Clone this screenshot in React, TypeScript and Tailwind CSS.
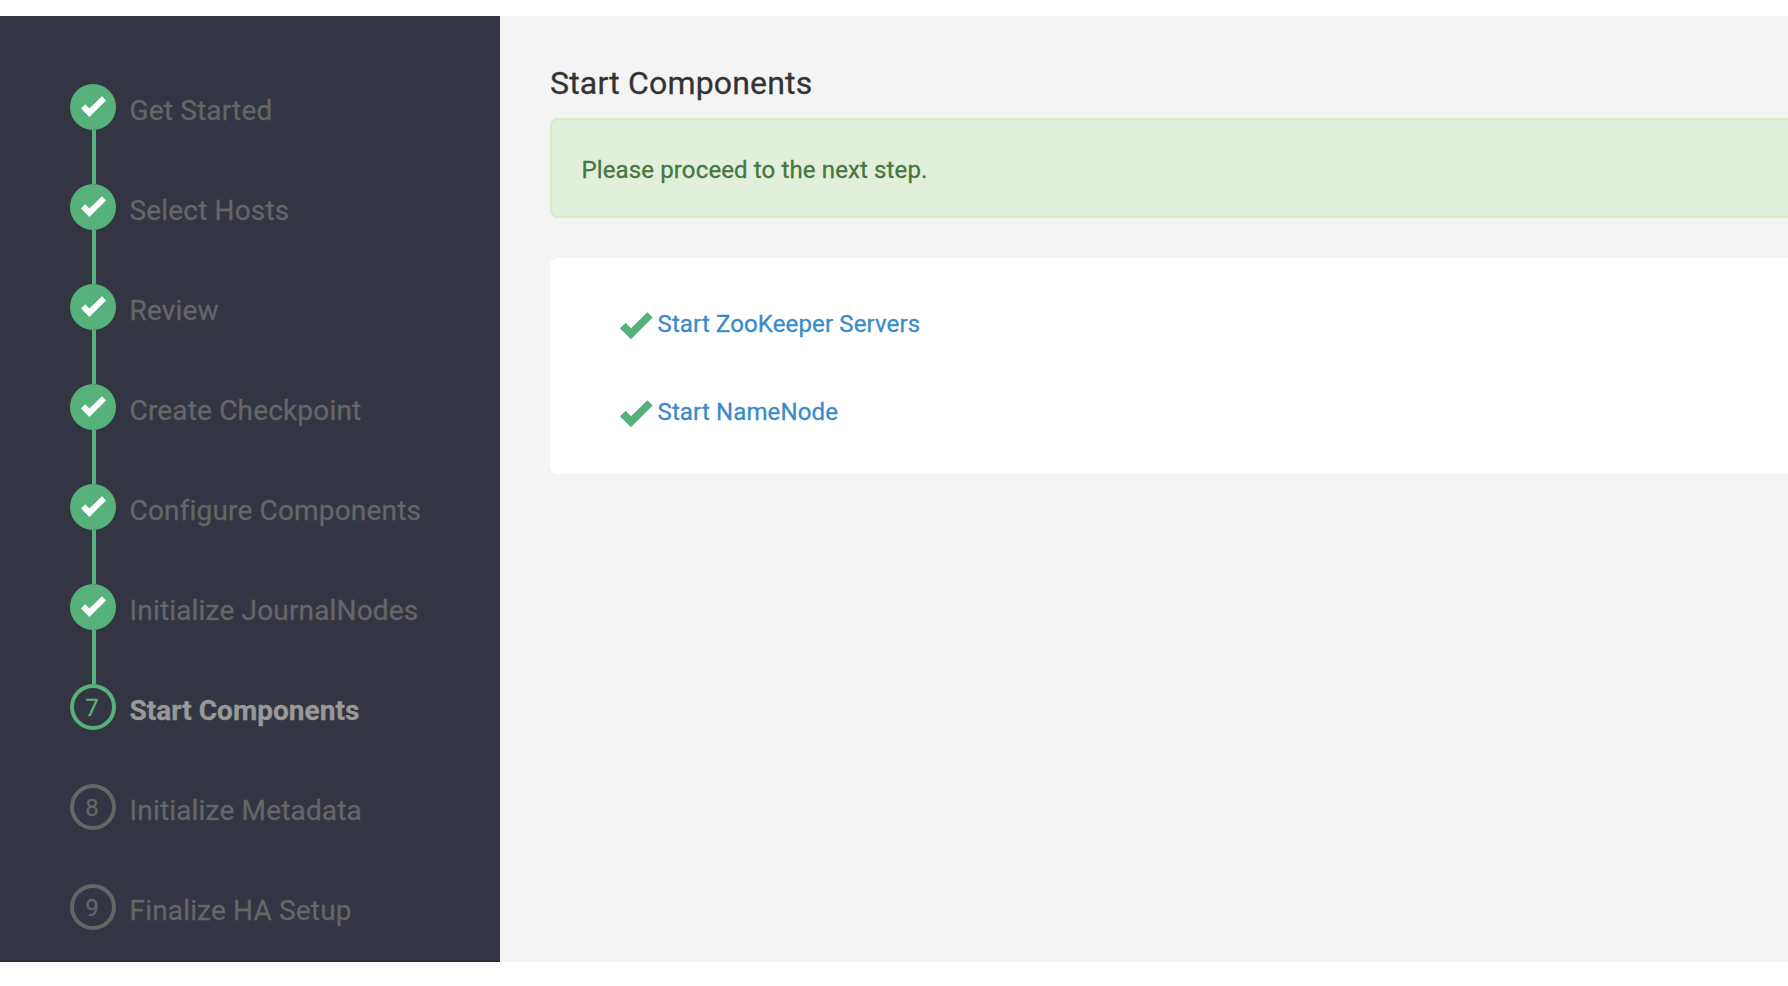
type Step = { label: string; state: "done" | "current" | "todo" };

const steps: Step[] = [
  { label: "Get Started", state: "done" },
  { label: "Select Hosts", state: "done" },
  { label: "Review", state: "done" },
  { label: "Create Checkpoint", state: "done" },
  { label: "Configure Components", state: "done" },
  { label: "Initialize JournalNodes", state: "done" },
  { label: "Start Components", state: "current" },
  { label: "Initialize Metadata", state: "todo" },
  { label: "Finalize HA Setup", state: "todo" },
];

const tasks = ["Start ZooKeeper Servers", "Start NameNode"];

function Check({ className }: { className: string }) {
  return (
    <svg viewBox="0 0 33 28" className={className} fill="currentColor" aria-hidden="true">
      <path d="M0 16.2 5.6 10.8 11 16.3 27.3 0.3 32.7 5.6 11 27.3Z" />
    </svg>
  );
}

const circleStyle = {
  done: "border-[#56b17a] bg-[#56b17a] text-white",
  current: "border-[#56b17a] text-[#56b17a]",
  todo: "border-[#666666] text-[#666666]",
};

function WizardStep({ step, index }: { step: Step; index: number }) {
  return (
    <li className="flex h-[100px] items-start">
      <div className="flex h-full w-[46px] shrink-0 flex-col items-center">
        <div
          className={`flex size-[46px] shrink-0 items-center justify-center rounded-full border-4 text-[24px] leading-none ${circleStyle[step.state]}`}
        >
          {step.state === "done" ? (
            <Check className="ml-[0.5px] h-[21.5px] w-[25.3px] shrink-0" />
          ) : (
            <span className="pt-[2px] pr-[2px] [-webkit-text-stroke:0.3px]">{index + 1}</span>
          )}
        </div>
        {step.state === "done" && <div className="ml-[2px] w-1 grow bg-[#56b17a]" />}
      </div>
      <span
        className={`mt-[7px] ml-[13.5px] text-[28px] leading-[40px] whitespace-nowrap [-webkit-text-stroke:0.3px] ${
          step.state === "current"
            ? "font-bold tracking-[0.03px] text-[#999999]"
            : "tracking-[0.17px] text-[#666666]"
        }`}
      >
        {step.label}
      </span>
    </li>
  );
}

export default function App() {
  return (
    <div className="h-[986px] w-full overflow-hidden bg-white pt-4 font-['Roboto',sans-serif]">
      <div className="flex h-[946px]">
        <aside className="w-[500px] shrink-0 overflow-hidden border-b-2 border-[#322c3d] bg-[#333542] pt-[68px] pl-[70px]">
          <ol>
            {steps.map((step, i) => (
              <WizardStep key={step.label} step={step} index={i} />
            ))}
          </ol>
        </aside>
        <main className="min-w-0 grow bg-[#f4f4f4] pt-[47px] pl-[50px]">
          <h1 className="text-[32px] leading-[40px] tracking-[0.18px] text-[#333333] [-webkit-text-stroke:0.3px]">
            Start Components
          </h1>
          <div className="mt-[15px] flex h-[100px] items-center rounded-l-lg border-2 border-r-0 border-[#dae9c8] bg-[#e2efda] pt-1 pl-[29.5px] text-[24px] tracking-[0.13px] text-[#43783f] [-webkit-text-stroke:0.3px]">
            Please proceed to the next step.
          </div>
          <div className="mt-10 h-[216px] rounded-l-lg bg-white pt-[22px] pl-[70px]">
            {tasks.map((task) => (
              <div
                key={task}
                className="flex h-[88px] items-center text-[24px] tracking-[0.13px] text-[#3a8bca] [-webkit-text-stroke:0.3px]"
              >
                <Check className="mt-[3px] mr-[4.5px] h-7 w-[33px] text-[#56b17a]" />
                <a href="#">{task}</a>
              </div>
            ))}
          </div>
        </main>
      </div>
    </div>
  );
}
